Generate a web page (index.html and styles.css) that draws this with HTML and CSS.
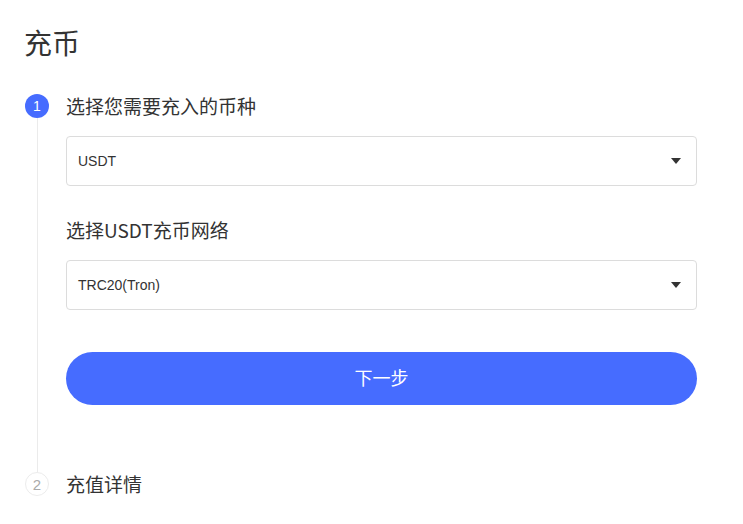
FILE: index.html
```html
<!DOCTYPE html>
<html lang="zh-CN">
<head>
<meta charset="utf-8">
<title>充币</title>
<link rel="stylesheet" href="styles.css">
</head>
<body>
<div class="page">
  <h1 class="title">充币</h1>
  <div class="steps">
    <div class="step">
      <div class="dot dot-active">1</div>
      <div class="step-label">选择您需要充入的币种</div>
      <div class="rail"></div>
      <div class="step-body">
        <div class="select">
          <span class="select-value">USDT</span>
          <span class="caret"></span>
        </div>
        <div class="field-label">选择USDT充币网络</div>
        <div class="select">
          <span class="select-value">TRC20(Tron)</span>
          <span class="caret"></span>
        </div>
        <button class="btn-next" type="button">下一步</button>
      </div>
    </div>
    <div class="step">
      <div class="dot dot-idle">2</div>
      <div class="step-label">充值详情</div>
    </div>
  </div>
</div>
</body>
</html>
```

FILE: styles.css
```css
* { box-sizing: border-box; }
html, body { margin: 0; padding: 0; background: #fff; }
body {
  font-family: "Noto Sans CJK SC", "Noto Sans", sans-serif;
  color: #333;
}
.page {
  padding: 24px 46px 0 24px;
}
.title {
  margin: 0;
  font-size: 28px;
  line-height: 36px;
  font-weight: 400;
  color: #333;
}
.steps {
  margin-top: 34px;
  padding-left: 1px;
}
.step {
  display: grid;
  grid-template-columns: 24px 1fr;
  column-gap: 17px;
  align-items: center;
}
.dot {
  width: 24px;
  height: 24px;
  border-radius: 50%;
  display: flex;
  align-items: center;
  justify-content: center;
  font-family: "Liberation Sans", Arial, sans-serif;
  font-size: 14px;
}
.dot-active {
  background: #466cff;
  color: #fff;
}
.dot-idle {
  border: 1px solid #ececec;
  color: #aaa;
  font-size: 15px;
}
.step-label {
  font-size: 19px;
  line-height: 24px;
  color: #333;
}
.rail {
  align-self: stretch;
  justify-self: center;
  width: 1px;
  background: #ebebeb;
}
.step-body {
  padding: 18px 0 67px;
}
.select {
  height: 50px;
  border: 1px solid #dcdcdc;
  border-radius: 4px;
  display: flex;
  align-items: center;
  justify-content: space-between;
  padding: 0 15px 0 11px;
}
.select-value {
  font-family: "Liberation Sans", Arial, sans-serif;
  font-size: 14px;
  color: #333;
}
.caret {
  width: 0;
  height: 0;
  border-left: 5px solid transparent;
  border-right: 5px solid transparent;
  border-top: 6px solid #333;
}
.field-label {
  margin: 32px 0 18px;
  font-size: 19px;
  line-height: 24px;
  color: #333;
}
.btn-next {
  display: block;
  width: 100%;
  height: 53px;
  margin-top: 42px;
  padding: 0 0 3px;
  border: 0;
  border-radius: 27px;
  background: #466cff;
  color: #fff;
  font-family: "Noto Sans CJK SC", sans-serif;
  font-size: 18px;
  cursor: pointer;
}
```
